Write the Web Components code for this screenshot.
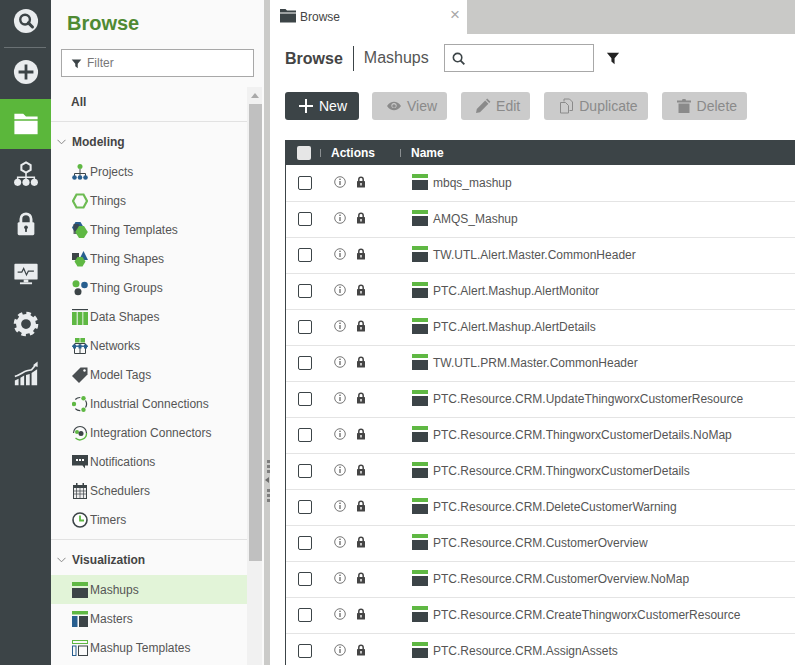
<!DOCTYPE html>
<html>
<head>
<meta charset="utf-8">
<title>Browse</title>
<style>
html, body { margin: 0; height: 100%; overflow: hidden; background: #fff; }
body { font: 12px "Liberation Sans", Arial, sans-serif; color: #555; }
</style>
</head>
<body>
<app-shell>
    <app-rail slot="rail">
        <rail-item icon="search"></rail-item>
        <rail-item icon="plus" separated></rail-item>
        <rail-item icon="folder" active></rail-item>
        <rail-item icon="org"></rail-item>
        <rail-item icon="lock"></rail-item>
        <rail-item icon="monitor"></rail-item>
        <rail-item icon="gear"></rail-item>
        <rail-item icon="chart"></rail-item>
    </app-rail>
    <browse-panel slot="panel">
        <nav-group title="Modeling">
            <nav-item icon="projects">Projects</nav-item>
            <nav-item icon="things">Things</nav-item>
            <nav-item icon="templates">Thing Templates</nav-item>
            <nav-item icon="shapes">Thing Shapes</nav-item>
            <nav-item icon="groups">Thing Groups</nav-item>
            <nav-item icon="datashapes">Data Shapes</nav-item>
            <nav-item icon="networks">Networks</nav-item>
            <nav-item icon="tag">Model Tags</nav-item>
            <nav-item icon="industrial">Industrial Connections</nav-item>
            <nav-item icon="integration">Integration Connectors</nav-item>
            <nav-item icon="notifications">Notifications</nav-item>
            <nav-item icon="schedulers">Schedulers</nav-item>
            <nav-item icon="timers">Timers</nav-item>
        </nav-group>
        <nav-group title="Visualization">
            <nav-item icon="mashup" selected>Mashups</nav-item>
            <nav-item icon="masters">Masters</nav-item>
            <nav-item icon="mashuptemplates">Mashup Templates</nav-item>
        </nav-group>
    </browse-panel>
    <pane-splitter slot="splitter"></pane-splitter>
    <browse-main slot="main">
        <action-button icon="plus" primary>New</action-button>
        <action-button icon="eye">View</action-button>
        <action-button icon="pencil">Edit</action-button>
        <action-button icon="copy">Duplicate</action-button>
        <action-button icon="trash">Delete</action-button>
        <mashup-table slot="table">
            <mashup-row>mbqs_mashup</mashup-row>
            <mashup-row>AMQS_Mashup</mashup-row>
            <mashup-row>TW.UTL.Alert.Master.CommonHeader</mashup-row>
            <mashup-row>PTC.Alert.Mashup.AlertMonitor</mashup-row>
            <mashup-row>PTC.Alert.Mashup.AlertDetails</mashup-row>
            <mashup-row>TW.UTL.PRM.Master.CommonHeader</mashup-row>
            <mashup-row>PTC.Resource.CRM.UpdateThingworxCustomerResource</mashup-row>
            <mashup-row>PTC.Resource.CRM.ThingworxCustomerDetails.NoMap</mashup-row>
            <mashup-row>PTC.Resource.CRM.ThingworxCustomerDetails</mashup-row>
            <mashup-row>PTC.Resource.CRM.DeleteCustomerWarning</mashup-row>
            <mashup-row>PTC.Resource.CRM.CustomerOverview</mashup-row>
            <mashup-row>PTC.Resource.CRM.CustomerOverview.NoMap</mashup-row>
            <mashup-row>PTC.Resource.CRM.CreateThingworxCustomerResource</mashup-row>
            <mashup-row>PTC.Resource.CRM.AssignAssets</mashup-row>
        </mashup-table>
    </browse-main>
</app-shell>

<script>
const DARK = "#3c4447", GREEN = "#5fb843", BLUE = "#285f8f", W = "#e9ecee";

// all icons, drawn on a 16x16 box (rail ones on 28x28)
const ICONS = {
    // rail
    search: `<svg viewBox="0 0 28 28"><circle cx="14" cy="14" r="13" fill="${W}"/><circle cx="13" cy="12.5" r="5.2" fill="none" stroke="${DARK}" stroke-width="2.6"/><path d="M16.5 16l4.500 4.500" stroke="${DARK}" stroke-width="3.2" stroke-linecap="round"/></svg>`,
    plus: `<svg viewBox="0 0 28 28"><circle cx="14" cy="14" r="13" fill="${W}"/><path d="M14 6v16M6 14h16" stroke="${DARK}" stroke-width="3"/></svg>`,
    folder: `<svg viewBox="0 0 28 28"><path d="M1.500 3h9.500l3 3h12.500v3h-25z" fill="#fff"/><rect x="1.500" y="10.500" width="25" height="14.500" fill="#fff"/></svg>`,
    org: `<svg viewBox="0 0 28 28"><path d="M14 1.500l5 2.800v5.400l-5 2.800-5-2.800v-5.400z" fill="none" stroke="${W}" stroke-width="2.200"/><path d="M14 12v5M5 21v-3.500h18v3.500M14 17v4" fill="none" stroke="${W}" stroke-width="1.600"/><circle cx="5" cy="23" r="3.800" fill="${W}"/><circle cx="14" cy="23" r="3.800" fill="${W}"/><circle cx="23" cy="23" r="3.800" fill="${W}"/></svg>`,
    lock: `<svg viewBox="0 0 28 28"><path d="M8.500 13v-4.500a5.500 5.500 0 0 1 11 0v4.500" fill="none" stroke="${W}" stroke-width="3"/><rect x="5" y="12" width="18" height="14" rx="1.500" fill="${W}"/><circle cx="14" cy="17.500" r="2" fill="${DARK}"/><rect x="13" y="18" width="2" height="4.500" fill="${DARK}"/></svg>`,
    monitor: `<svg viewBox="0 0 28 28"><rect x="1.500" y="3" width="25" height="17" rx="1" fill="${W}"/><path d="M5 12h4.500l2-4 3 7 2-4h6" fill="none" stroke="${DARK}" stroke-width="1.300"/><rect x="11.500" y="20" width="5" height="3" fill="${W}"/><rect x="7.500" y="23" width="13" height="2" fill="${W}"/></svg>`,
    gear: `<svg viewBox="0 0 28 28"><circle cx="14" cy="14" r="8" fill="none" stroke="${W}" stroke-width="5.500"/><circle cx="14" cy="14" r="11" fill="none" stroke="${W}" stroke-width="4.500" stroke-dasharray="4.640 4"/></svg>`,
    chart: `<svg viewBox="0 0 28 28"><path d="M2 16.500c5-1 9-5 13-6l5-1 5-6" fill="none" stroke="${W}" stroke-width="1.800"/><path d="M26.500 0.500v6l-5-2z" fill="${W}"/><path d="M2 26v-5l4-2v7zM8 26v-8l4-2.500v10.500zM14 26v-11l4-1v12zM20 26v-13l6-4v17z" fill="${W}"/></svg>`,

    // nav
    projects: `<svg viewBox="0 0 16 16"><circle cx="8" cy="2.500" r="2.500" fill="${GREEN}"/><path d="M8 5v5M2.500 12v-2.500h11v2.500M8 9v3" fill="none" stroke="${DARK}"/><circle cx="2.500" cy="13.500" r="2.300" fill="${BLUE}"/><circle cx="8" cy="13.500" r="2.300" fill="${BLUE}"/><circle cx="13.500" cy="13.500" r="2.300" fill="${BLUE}"/></svg>`,
    things: `<svg viewBox="0 0 16 16"><path d="M4.500 1.500h7l3.500 6.500-3.500 6.500h-7l-3.500-6.500z" fill="none" stroke="#6dbb52" stroke-width="2.200"/></svg>`,
    templates: `<svg viewBox="0 0 16 16"><path d="M3.500 0h5l3 5-3 6h-5l-3.500-5.500z" fill="${BLUE}"/><path d="M1.500 2h5l3 5-3 5h-5z" fill="${DARK}" opacity=".8"/><path d="M7 4h5l3.800 6-3.800 6h-5l-3.800-6z" fill="${GREEN}"/></svg>`,
    shapes: `<svg viewBox="0 0 16 16"><rect x="0" y="2" width="7" height="7" fill="${DARK}"/><path d="M11.500 0l4.500 9h-9z" fill="${BLUE}"/><path d="M5.500 6h5l3 4.500-3 5h-5l-3-5z" fill="${GREEN}"/></svg>`,
    groups: `<svg viewBox="0 0 16 16"><circle cx="4" cy="3.800" r="3.500" fill="${GREEN}"/><circle cx="12.500" cy="5" r="3.300" fill="${BLUE}"/><circle cx="6" cy="11.800" r="3.500" fill="${DARK}"/></svg>`,
    datashapes: `<svg viewBox="0 0 16 16"><rect x="0" y="0" width="16" height="1.200" fill="${DARK}"/><rect x="0" y="3" width="4.700" height="13" fill="${GREEN}"/><rect x="5.700" y="3" width="4.700" height="13" fill="${GREEN}"/><rect x="11.300" y="3" width="4.700" height="13" fill="${GREEN}"/></svg>`,
    networks: `<svg viewBox="0 0 16 16"><rect x="3" y="0" width="4.600" height="4.500" fill="${GREEN}"/><rect x="8.400" y="0" width="4.600" height="4.500" fill="${GREEN}"/><path d="M3 5.500h10M2.500 5.500v10h11v-10M8 5.500v10" fill="none" stroke="${DARK}"/><rect x="0" y="7.500" width="16" height="1.400" fill="${BLUE}"/><rect x="1" y="6.500" width="3" height="4" fill="${BLUE}"/><rect x="6.500" y="6.500" width="3" height="4" fill="${BLUE}"/><rect x="12" y="6.500" width="3" height="4" fill="${BLUE}"/></svg>`,
    tag: `<svg viewBox="0 0 16 16"><path d="M8.500 0.500h7v7l-8.500 8.500-7-7z" fill="#4a4f52"/><circle cx="12.500" cy="3.500" r="1.200" fill="#fff"/></svg>`,
    industrial: `<svg viewBox="0 0 16 16"><path d="M3.300 3.500a6.600 6.600 0 0 1 5-2M13.500 4.500a6.600 6.600 0 0 1 0 7M8.300 14.600a6.600 6.600 0 0 1-5-2" fill="none" stroke="${DARK}" stroke-width="1.200"/><circle cx="2" cy="8" r="2.200" fill="${GREEN}"/><circle cx="11.500" cy="2.200" r="2.200" fill="${GREEN}"/><circle cx="11.500" cy="13.800" r="2.200" fill="${GREEN}"/></svg>`,
    integration: `<svg viewBox="0 0 16 16"><path d="M1.500 8a6.500 6.500 0 0 1 13 0" fill="none" stroke="${DARK}" stroke-width="1.200"/><path d="M14.500 8a6.500 6.500 0 0 1-11 5" fill="none" stroke="${GREEN}" stroke-width="1.400"/><circle cx="5" cy="7" r="2" fill="${GREEN}"/><circle cx="9" cy="8.500" r="2.500" fill="${DARK}"/></svg>`,
    notifications: `<svg viewBox="0 0 16 16"><path d="M0 1h16v10.500h-3v3l-2.500-3h-10.500z" fill="${DARK}"/><rect x="4" y="5" width="2" height="2" fill="#fff"/><rect x="7" y="5" width="2" height="2" fill="#fff"/><rect x="10" y="5" width="2" height="2" fill="#fff"/></svg>`,
    schedulers: `<svg viewBox="0 0 16 16"><rect x="1.500" y="2.500" width="13" height="13" fill="#eee" stroke="${DARK}"/><rect x="1" y="2" width="14" height="3" fill="${DARK}"/><rect x="4" y="0" width="1.500" height="3" fill="${DARK}"/><rect x="10.500" y="0" width="1.500" height="3" fill="${DARK}"/><path d="M4.500 5v10M8 5v10M11.500 5v10M2 8h12M2 11h12" stroke="${DARK}" stroke-width=".7" fill="none"/></svg>`,
    timers: `<svg viewBox="0 0 16 16"><circle cx="8" cy="8" r="7" fill="#fff" stroke="${DARK}" stroke-width="1.600"/><path d="M8 3.500v5h4" fill="none" stroke="${GREEN}" stroke-width="1.800"/></svg>`,
    mashup: `<svg viewBox="0 0 16 16"><rect width="16" height="4" fill="${GREEN}"/><rect y="6" width="16" height="10" fill="${DARK}"/></svg>`,
    masters: `<svg viewBox="0 0 16 16"><rect width="16" height="3.500" fill="${GREEN}"/><rect y="5" width="5.500" height="11" fill="${BLUE}"/><rect x="7" y="5" width="9" height="11" fill="${DARK}"/></svg>`,
    mashuptemplates: `<svg viewBox="0 0 16 16"><rect x=".5" y=".5" width="15" height="3" fill="none" stroke="${GREEN}"/><rect x=".5" y="6" width="3.500" height="9.500" fill="none" stroke="${BLUE}"/><rect x="6.500" y="6" width="9" height="9.500" fill="none" stroke="${DARK}"/></svg>`,

    // toolbar
    tabfolder: `<svg viewBox="0 0 16 16"><path d="M0 1h5.500l1.500 1.500h9v2h-16z" fill="${DARK}"/><rect y="5.500" width="16" height="9" fill="${DARK}"/></svg>`,
    funnel: `<svg viewBox="0 0 16 16"><path d="M1 2h14l-5.200 6.200v6.800l-3.600-3v-3.800z" fill="currentColor"/></svg>`,
    glass: `<svg viewBox="0 0 16 16"><circle cx="7" cy="7" r="4.500" fill="none" stroke="currentColor" stroke-width="1.700"/><path d="M10 10l4.200 4.200" stroke="currentColor" stroke-width="2"/></svg>`,
    eye: `<svg viewBox="0 0 16 16"><path d="M1 8c2-3 4.500-4.300 7-4.300s5 1.300 7 4.300c-2 3-4.500 4.300-7 4.300s-5-1.300-7-4.300z" fill="currentColor"/><circle cx="8" cy="7.500" r="2.600" fill="#cbcbcb"/><circle cx="8" cy="8" r="1.800" fill="currentColor"/></svg>`,
    pencil: `<svg viewBox="0 0 16 16"><path d="M1 15l.8-4 8.400-8.400 3.200 3.200-8.400 8.400zM11 1.800l1.200-1.200 3.200 3.200-1.200 1.200z" fill="currentColor"/></svg>`,
    copy: `<svg viewBox="0 0 16 16"><path d="M6 3.500v-2.500h5.500l3 3v8.500h-3" fill="none" stroke="currentColor"/><path d="M2.500 4.500h5l3 3v7.500h-8z" fill="none" stroke="currentColor"/></svg>`,
    trash: `<svg viewBox="0 0 16 16"><path d="M1 2.500h5l.5-1.500h3l.5 1.500h5v2h-14z" fill="currentColor"/><path d="M2.500 5.500h11v9.500h-11z" fill="currentColor"/></svg>`,
    info: `<svg viewBox="0 0 12 12"><circle cx="6" cy="6" r="5.300" fill="none" stroke="#666" stroke-width=".9"/><path d="M6 5v4" stroke="#666" stroke-width="1.300"/><rect x="5.300" y="2.600" width="1.400" height="1.400" fill="#666"/></svg>`,
    rowlock: `<svg viewBox="0 0 10 12"><path d="M2.800 6v-2.500a2.200 2.200 0 0 1 4.400 0v2.500" fill="none" stroke="#444" stroke-width="1.500"/><rect x="1" y="5" width="8" height="6.500" rx=".6" fill="#444"/><rect x="4.300" y="7" width="1.400" height="2.500" fill="#fff"/></svg>`
};

const shellTemplate = document.createElement("template");
shellTemplate.innerHTML = `
<style>
:host { display: flex; height: 665px; overflow: hidden; }
</style>
<slot name="rail"></slot>
<slot name="panel"></slot>
<slot name="splitter"></slot>
<slot name="main"></slot>`;
class AppShell extends HTMLElement {
    constructor() {
        super();
        this.attachShadow({ mode: 'open' });
        this.shadowRoot.appendChild(shellTemplate.content.cloneNode(true));
    }
}
customElements.define('app-shell', AppShell);

const railTemplate = document.createElement("template");
railTemplate.innerHTML = `
<style>
:host { display: flex; flex-direction: column; flex: none; width: 51px; background: #3c4447; }
</style>
<slot></slot>`;
class AppRail extends HTMLElement {
    constructor() {
        super();
        this.attachShadow({ mode: 'open' });
        this.shadowRoot.appendChild(railTemplate.content.cloneNode(true));
    }
}
customElements.define('app-rail', AppRail);

class RailItem extends HTMLElement {
    constructor() {
        super();
        this.attachShadow({ mode: 'open' });
        this.shadowRoot.innerHTML = `
<style>
:host { display: flex; align-items: center; justify-content: center; height: 50px; box-sizing: border-box; }
:host(:first-child) { height: 47px; padding: 0 0 5px 0; }
:host([separated]) { height: 52px; padding-bottom: 2px; position: relative; }
:host([separated])::before { content: ""; position: absolute; left: 4px; right: 5px; top: 0; height: 1px; background: #6a7174; }
:host([active]) { background: #5bb73b; }
svg { display: block; width: 26px; height: 26px; }
</style>${ICONS[this.getAttribute('icon')]}`;
    }
}
customElements.define('rail-item', RailItem);

const panelTemplate = document.createElement("template");
panelTemplate.innerHTML = `
<style>
:host { display: block; flex: none; width: 213px; height: 665px; background: #fafafa; overflow: hidden; }
h1 { margin: 0; height: 49px; box-sizing: border-box; padding: 11px 0 0 16px; font: bold 20px/24px "Liberation Sans", sans-serif; color: #4f8a33; }
.filter { display: flex; align-items: center; gap: 5px; box-sizing: border-box; width: 193px; height: 28px; margin: 0 0 10px 10px; padding-left: 9px; background: #fff; border: 1px solid #a8a8a8; color: #777; }
.filter svg { width: 11px; height: 11px; color: #3c4447; }
.body { display: flex; height: 578px; }
.list { width: 196px; flex: none; }
.all { height: 35px; box-sizing: border-box; padding: 8px 0 0 20px; font-weight: bold; line-height: 14px; color: #444; border-bottom: 1px solid #e2e2e2; }
.bar { width: 15px; margin: 0 2px 0 0; padding: 0 0 0 2px; background: #f1f1f1; }
.up { height: 17px; display: flex; align-items: center; justify-content: center; padding-right: 2px; }
.up::before { content: ""; border: 4px solid transparent; border-top: 0; border-bottom: 5px solid #a9a9a9; }
.thumb { width: 13px; height: 457px; background: #c0c0c0; }
</style>
<h1>Browse</h1>
<div class="filter">${ICONS.funnel}<span>Filter</span></div>
<div class="body">
    <div class="list">
        <div class="all">All</div>
        <slot></slot>
    </div>
    <div class="bar"><div class="up"></div><div class="thumb"></div></div>
</div>`;
class BrowsePanel extends HTMLElement {
    constructor() {
        super();
        this.attachShadow({ mode: 'open' });
        this.shadowRoot.appendChild(panelTemplate.content.cloneNode(true));
    }
}
customElements.define('browse-panel', BrowsePanel);

class NavGroup extends HTMLElement {
    constructor() {
        super();
        this.attachShadow({ mode: 'open' });
        this.shadowRoot.innerHTML = `
<style>
:host { display: block; padding-bottom: 5px; border-bottom: 1px solid #e2e2e2; }
:host(:last-child) { border-bottom: 0; }
.head { display: flex; align-items: center; height: 35px; box-sizing: border-box; padding: 5px 0 0 6px; font-weight: bold; color: #444; }
.head svg { width: 9px; height: 6px; margin-right: 6px; }
</style>
<div class="head"><svg viewBox="0 0 9 6"><path d="M.5 .8l4 4 4-4" fill="none" stroke="#888"/></svg><span>${this.getAttribute('title')}</span></div>
<slot></slot>`;
    }
}
customElements.define('nav-group', NavGroup);

class NavItem extends HTMLElement {
    constructor() {
        super();
        this.attachShadow({ mode: 'open' });
        this.shadowRoot.innerHTML = `
<style>
:host { display: flex; align-items: center; gap: 2px; height: 29px; padding-left: 21px; color: #555; }
:host([selected]) { background: #e2f4d8; }
svg { display: block; width: 16px; height: 16px; flex: none; }
</style>${ICONS[this.getAttribute('icon')]}<span><slot></slot></span>`;
    }
}
customElements.define('nav-item', NavItem);

const splitterTemplate = document.createElement("template");
splitterTemplate.innerHTML = `
<style>
:host { display: flex; flex-direction: column; align-items: center; flex: none; width: 6px; height: 665px; background: #cbcbc9; padding-top: 460px; box-sizing: border-box; }
i { display: block; width: 3px; height: 3px; background: #7e7e7e; margin-bottom: 2px; margin-left: 2px; }
b { display: block; margin: 2px 0 6px; border: 3px solid transparent; border-left: 0; border-right: 4px solid #6d6d6d; }
</style>
<i></i><i></i><i></i><b></b><i></i><i></i><i></i>`;
class PaneSplitter extends HTMLElement {
    constructor() {
        super();
        this.attachShadow({ mode: 'open' });
        this.shadowRoot.appendChild(splitterTemplate.content.cloneNode(true));
    }
}
customElements.define('pane-splitter', PaneSplitter);

const mainTemplate = document.createElement("template");
mainTemplate.innerHTML = `
<style>
:host { display: block; flex: 1; min-width: 0; height: 665px; overflow: hidden; background: #fff; }
.tabs { display: flex; height: 34px; background: #c9c9c7; }
.tab { display: flex; align-items: center; width: 197px; box-sizing: border-box; padding: 0 7px 0 10px; background: #fff; color: #444; }
.tab svg { width: 16px; height: 16px; margin: -2px 4px 0 0; }
.tab span { flex: 1; }
.tab em { font: normal 17px/1 "Liberation Sans", sans-serif; color: #a8a8a8; margin-top: -5px; }
.head { display: flex; align-items: center; height: 28px; margin: 10px 0 20px 15px; }
.head b { font-size: 16px; color: #444; padding-right: 10px; border-right: 1px solid #3c4447; line-height: 25px; }
.head span { font-size: 16px; color: #555; margin: 0 15px 0 10px; }
.search { display: flex; align-items: center; width: 150px; height: 28px; box-sizing: border-box; padding-left: 6px; border: 1px solid #a8a8a8; color: #3c4447; }
.search svg { width: 15px; height: 15px; }
.funnel { width: 14px; height: 14px; margin-left: 12px; color: #222; }
.actions { display: flex; margin: 0 0 20px 15px; }
::slotted([slot="table"]) { margin-left: 15px; }
</style>
<div class="tabs"><div class="tab">${ICONS.tabfolder}<span>Browse</span><em>&#215;</em></div></div>
<div class="head"><b>Browse</b><span>Mashups</span><div class="search">${ICONS.glass}</div>${ICONS.funnel.replace('<svg', '<svg class="funnel"')}</div>
<div class="actions"><slot></slot></div>
<slot name="table"></slot>`;
class BrowseMain extends HTMLElement {
    constructor() {
        super();
        this.attachShadow({ mode: 'open' });
        this.shadowRoot.appendChild(mainTemplate.content.cloneNode(true));
    }
}
customElements.define('browse-main', BrowseMain);

class ActionButton extends HTMLElement {
    constructor() {
        super();
        this.attachShadow({ mode: 'open' });
        this.shadowRoot.innerHTML = `
<style>
:host { display: flex; align-items: center; gap: 5px; height: 28px; box-sizing: border-box; padding: 0 10px 0 14px; margin-right: 14px; border-radius: 3px; background: #cbcbcb; color: #8a8a8a; font-size: 14px; }
:host([primary]) { background: #3c4447; color: #fff; padding: 0 12px 0 13px; margin-right: 13px; }
svg { display: block; width: 16px; height: 16px; }
</style>${this.hasAttribute('primary')
    ? `<svg viewBox="0 0 16 16"><path d="M8 1v14M1 8h14" stroke="#fff" stroke-width="2"/></svg>`
    : ICONS[this.getAttribute('icon')]}<span><slot></slot></span>`;
    }
}
customElements.define('action-button', ActionButton);

const tableTemplate = document.createElement("template");
tableTemplate.innerHTML = `
<style>
:host { display: block; border-left: 1px solid #3c4447; }
.head { display: flex; align-items: center; height: 25px; background: #3c4447; color: #fff; font-weight: bold; }
.check { width: 14px; height: 14px; margin-left: 11px; background: #e6e6e6; border-radius: 2px; }
.head i { width: 1px; height: 8px; background: #8a8f91; }
.first { margin: 0 10px 0 9px; }
.second { margin: 0 10px 0 0; }
.actions { width: 69px; }
</style>
<div class="head"><div class="check"></div><i class="first"></i><span class="actions">Actions</span><i class="second"></i><span>Name</span></div>
<slot></slot>`;
class MashupTable extends HTMLElement {
    constructor() {
        super();
        this.attachShadow({ mode: 'open' });
        this.shadowRoot.appendChild(tableTemplate.content.cloneNode(true));
    }
}
customElements.define('mashup-table', MashupTable);

class MashupRow extends HTMLElement {
    constructor() {
        super();
        this.attachShadow({ mode: 'open' });
        this.shadowRoot.innerHTML = `
<style>
:host { display: flex; align-items: center; height: 36px; box-sizing: border-box; padding-bottom: 1px; border-top: 1px solid #e4e4e4; color: #555; }
:host(:first-child) { border-top-color: transparent; }
.check { width: 12px; height: 12px; margin: 0 22px 0 12px; border: 1px solid #3c4447; border-radius: 2px; background: #fff; }
.info { width: 12px; height: 12px; margin: -2px 10px 0 0; }
.lock { width: 10px; height: 12px; margin: -2px 46px 0 0; }
.type { width: 16px; height: 16px; margin: -2px 5px 0 0; }
svg { display: block; flex: none; }
</style>
<div class="check"></div>
${ICONS.info.replace('<svg', '<svg class="info"')}
${ICONS.rowlock.replace('<svg', '<svg class="lock"')}
${ICONS.mashup.replace('<svg', '<svg class="type"')}
<span><slot></slot></span>`;
    }
}
customElements.define('mashup-row', MashupRow);
</script>
</body>
</html>
